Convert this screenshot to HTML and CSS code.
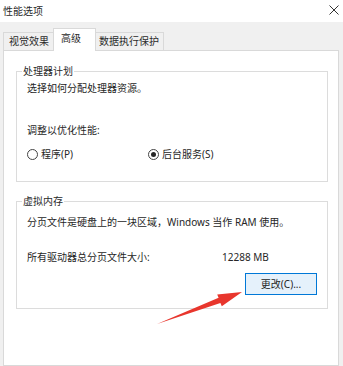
FILE: index.html
```html
<!DOCTYPE html>
<html lang="zh-CN">
<head>
<meta charset="utf-8">
<title>性能选项</title>
<link rel="stylesheet" href="styles.css">
</head>
<body>
<div class="window">
  <div class="titlebar">
    <span class="title">性能选项</span>
    <svg class="close" width="10" height="10" viewBox="0 0 10 10"><path d="M0.5 0.5L9.5 9.5M9.5 0.5L0.5 9.5" stroke="#333" stroke-width="1" fill="none"/></svg>
  </div>
  <div class="tabs">
    <div class="tab tab-first">视觉效果</div>
    <div class="tab tab-active">高级</div>
    <div class="tab tab-last">数据执行保护</div>
  </div>
  <div class="panel">
    <fieldset class="group group-cpu">
      <legend>处理器计划</legend>
      <p class="line">选择如何分配处理器资源。</p>
      <p class="line line-sub">调整以优化性能:</p>
      <div class="radios">
        <label class="radio"><span class="dot"></span>程序(P)</label>
        <label class="radio"><span class="dot dot-on"></span>后台服务(S)</label>
      </div>
    </fieldset>
    <fieldset class="group group-mem">
      <legend>虚拟内存</legend>
      <p class="line line-first">分页文件是硬盘上的一块区域，Windows 当作 RAM 使用。</p>
      <div class="size-row">
        <span class="size-label">所有驱动器总分页文件大小:</span>
        <span class="size-value">12288 MB</span>
      </div>
      <div class="btn-row">
        <button class="btn">更改(C)...</button>
      </div>
    </fieldset>
  </div>
</div>
<svg class="arrow" width="343" height="366" viewBox="0 0 343 366">
  <polygon points="157,324 218.6,297.8 217.2,294.4 242,292 221.8,306.2 220.4,302.9" fill="#e8362d"/>
</svg>
</body>
</html>
```
FILE: styles.css
```css
html, body {
  margin: 0;
  padding: 0;
}
body {
  width: 343px;
  height: 366px;
  overflow: hidden;
  position: relative;
  background: #f0f0f0;
  font-family: "Noto Sans", "Noto Sans CJK SC", sans-serif;
  font-size: 10px;
  line-height: 14px;
  color: #262626;
}
.window {
  display: flex;
  flex-direction: column;
  height: 366px;
}
.titlebar {
  height: 22px;
  background: #fff;
  display: flex;
  align-items: center;
  justify-content: space-between;
  padding: 0 4px 0 3px;
  box-sizing: border-box;
}
.title {
  color: #2a2a2a;
}
.close {
  display: block;
  margin-top: -2px;
}
.tabs {
  display: flex;
  align-items: flex-end;
  height: 28px;
  padding-left: 3px;
  box-sizing: border-box;
}
.tab {
  height: 18px;
  box-sizing: border-box;
  border: 1px solid #d9d9d9;
  border-bottom: none;
  background: #f0f0f0;
  line-height: 17px;
  padding: 0 4px;
  color: #2a2a2a;
}
.tab-first {
  width: 50px;
  padding-left: 5px;
  border-right: none;
}
.tab-active {
  width: 43px;
  background: #fff;
  padding-left: 7px;
  line-height: 19px;
  margin-bottom: -1px;
  position: relative;
  z-index: 1;
  height: 23px;
}
.tab-last {
  width: 68px;
  border-left: none;
  padding-left: 3px;
}
.panel {
  flex: 1;
  background: #fff;
  border: 1px solid #d9d9d9;
  margin: 0 4px 0 3px;
  padding: 13px 10px 0 12px;
}
.group {
  margin: 0;
  border: 1px solid #dcdcdc;
  padding: 3px 10px 20px 10px;
  min-width: 0;
}
.group legend {
  padding: 0 1px;
  margin-left: -5px;
  line-height: 14px;
  color: #2a2a2a;
}
.group-mem {
  margin-top: 12px;
  padding-bottom: 13px;
}
.line {
  margin: 0;
}
.line-sub {
  margin-top: 28px;
}
.line-first {
  margin-top: 4px;
}
.radios {
  display: grid;
  grid-template-columns: 121px auto;
  margin-top: 10px;
}
.radio {
  display: flex;
  align-items: center;
  gap: 3px;
}
.dot {
  width: 11px;
  height: 11px;
  box-sizing: border-box;
  border: 1px solid #444;
  border-radius: 50%;
  display: flex;
  align-items: center;
  justify-content: center;
}
.dot-on::after {
  content: "";
  width: 5px;
  height: 5px;
  border-radius: 50%;
  background: #262626;
}
.size-row {
  display: flex;
  margin-top: 21px;
}
.size-label {
  width: 195px;
}
.btn-row {
  display: flex;
  justify-content: flex-end;
  margin-top: 9px;
}
.btn {
  width: 72px;
  height: 22px;
  margin: 0;
  padding: 0;
  background: #e5f1fb;
  border: 1px solid #0078d7;
  font-family: inherit;
  font-size: 10px;
  line-height: 14px;
  color: #262626;
}
.arrow {
  position: absolute;
  left: 0;
  top: 0;
  pointer-events: none;
}
```
